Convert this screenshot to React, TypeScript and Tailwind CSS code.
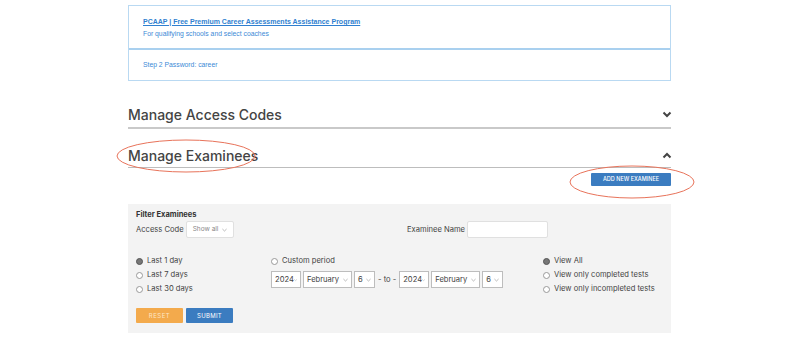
import React from 'react';

const sans = { fontFamily: 'Inter, "Open Sans", sans-serif' };

function Radio({ checked, label }: { checked?: boolean; label: string }) {
  return (
    <div className="flex items-center gap-[4px] h-[14px]">
      <span
        className={
          checked
            ? 'w-[7px] h-[7px] rounded-full bg-[#777] border border-[#555]'
            : 'w-[7px] h-[7px] rounded-full bg-white border border-[#999]'
        }
      />
      <span className="text-[7.6px] text-[#444]">{label}</span>
    </div>
  );
}

function Select({ value, w }: { value: string; w: string }) {
  return (
    <div className={`${w} h-[17px] bg-white border border-[#bdbdbd] flex items-center justify-between px-[3px] text-[7.6px] text-[#444]`}>
      <span>{value}</span>
      <svg width="5" height="4" viewBox="0 0 6 4"><polyline points="0.5,0.8 3,3.2 5.5,0.8" fill="none" stroke="#999" strokeWidth="0.8" /></svg>
    </div>
  );
}

function Chevron({ up }: { up?: boolean }) {
  return (
    <svg width="10" height="7" viewBox="0 0 10 7">
      <polyline points={up ? '1.5,5.5 5,2 8.5,5.5' : '1.5,1.5 5,5 8.5,1.5'} fill="none" stroke="#444" strokeWidth="2" />
    </svg>
  );
}

export default function App() {
  return (
    <div className="relative w-[800px] h-[347px] bg-white overflow-hidden" style={sans}>
      <div className="w-[543px] ml-[128px] pt-[5px]">
        {/* info box */}
        <div className="border border-[#b9d9f2]" style={{ fontFamily: '"Liberation Sans", Arial, sans-serif' }}>
          <div className="h-[42px] pl-[14px] pt-[11px]">
            <div className="text-[7px] font-bold text-[#2f7fd0] underline leading-[10px]">PCAAP | Free Premium Career Assessments Assistance Program</div>
            <div className="text-[6.8px] text-[#3d8ad6] leading-[10px] mt-[2px]">For qualifying schools and select coaches</div>
          </div>
          <div className="h-[2px] bg-[#a9d0ef]" />
          <div className="h-[30px] pl-[14px] flex items-center text-[6.8px] text-[#3d8ad6]">Step 2 Password: career</div>
        </div>

        {/* access codes */}
        <div className="mt-[23px] flex items-center justify-between h-[20px]">
          <span className="text-[14px] font-medium text-[#444]">Manage Access Codes</span>
          <span className="mr-[-1px]"><Chevron /></span>
        </div>
        <div className="h-[2px] bg-[#c9c9c9] mt-[3px]" />

        {/* examinees */}
        <div className="mt-[16px] flex items-center justify-between h-[20px]">
          <span className="text-[14px] font-medium text-[#444]">Manage Examinees</span>
          <span className="mr-[-1px]"><Chevron up /></span>
        </div>
        <div className="h-[1px] bg-[#bdbdbd] mt-[2px]" />

        <div className="flex justify-end mt-[5px]">
          <button className="w-[80px] h-[13px] bg-[#3b7cc0] text-white text-[5.5px] font-medium uppercase rounded-[1px]">Add New Examinee</button>
        </div>

        {/* filter panel */}
        <div className="mt-[18px] bg-[#f3f3f3] h-[129px] pl-[8px] pt-[6px]">
          <div className="text-[7.5px] font-bold text-[#333] leading-[10px]">Filter Examinees</div>
          <div className="flex items-center h-[17px] mt-[1px]">
            <div className="w-[271px] flex items-center gap-[2px]">
              <span className="text-[7.6px] text-[#444]">Access Code</span>
              <div className="w-[48px] h-[17px] bg-white border border-[#e0e0e0] rounded-[2px] flex items-center justify-between px-[6px] text-[6.5px] text-[#888]">
                <span>Show all</span>
                <svg width="5" height="4" viewBox="0 0 6 4"><polyline points="0.5,0.8 3,3.2 5.5,0.8" fill="none" stroke="#999" strokeWidth="0.8" /></svg>
              </div>
            </div>
            <div className="flex items-center gap-[2px]">
              <span className="text-[7.6px] text-[#444]">Examinee Name</span>
              <div className="w-[81px] h-[17px] bg-white border border-[#e0e0e0] rounded-[2px]" />
            </div>
          </div>

          <div className="flex mt-[16px]">
            <div className="w-[135px] flex flex-col">
              <Radio checked label="Last 1 day" />
              <Radio label="Last 7 days" />
              <Radio label="Last 30 days" />
            </div>
            <div className="w-[272px] flex flex-col">
              <Radio label="Custom period" />
              <div className="flex items-center gap-[2px] mt-[3px]">
                <Select value="2024" w="w-[30px]" />
                <Select value="February" w="w-[49px]" />
                <Select value="6" w="w-[21px]" />
                <span className="text-[7.6px] text-[#444] mx-[1px]">- to -</span>
                <Select value="2024" w="w-[30px]" />
                <Select value="February" w="w-[49px]" />
                <Select value="6" w="w-[21px]" />
              </div>
            </div>
            <div className="flex flex-col">
              <Radio checked label="View All" />
              <Radio label="View only completed tests" />
              <Radio label="View only incompleted tests" />
            </div>
          </div>

          <div className="flex gap-[3px] mt-[12px]">
            <button className="w-[47px] h-[15px] bg-[#f3aa4c] text-[#fde6c6] text-[6px] uppercase tracking-[0.5px] rounded-[1px]">Reset</button>
            <button className="w-[47px] h-[15px] bg-[#3b7cc0] text-white text-[6px] uppercase tracking-[0.3px] rounded-[1px]">Submit</button>
          </div>
        </div>
      </div>

      {/* annotation ellipses */}
      <svg className="absolute left-0 top-0 pointer-events-none" width="800" height="347">
        <ellipse cx="186" cy="156" rx="69" ry="16" fill="none" stroke="#e8735a" strokeWidth="1" />
        <ellipse cx="632" cy="182" rx="62" ry="16" fill="none" stroke="#e8735a" strokeWidth="1" />
      </svg>
    </div>
  );
}
